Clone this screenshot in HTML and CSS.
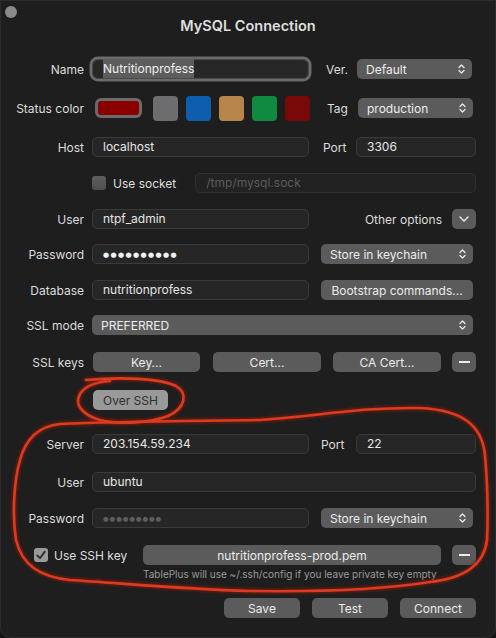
FILE: index.html
```html
<!DOCTYPE html>
<html>
<head>
<meta charset="utf-8">
<link rel="stylesheet" href="styles.css">
</head>
<body>
<div class="window">
  <div class="traffic"></div>
  <div class="title">MySQL Connection</div>

  <div class="form">
    <div class="row r-name">
      <span class="lbl">Name</span>
      <div class="input main focus"><span class="selected-text">Nutritionprofess</span></div>
      <span class="mid mid-ver">Ver.</span>
      <div class="select side"><span>Default</span><svg class="updown" viewBox="0 0 7 12"><path d="M1 4.5 L3.5 2 L6 4.5 M1 7.5 L3.5 10 L6 7.5"/></svg></div>
    </div>

    <div class="row r-status">
      <span class="lbl">Status color</span>
      <div class="swatch-current"><div class="swatch-fill"></div></div>
      <div class="swatches">
        <div class="swatch sw-gray"></div>
        <div class="swatch sw-blue"></div>
        <div class="swatch sw-orange"></div>
        <div class="swatch sw-green"></div>
        <div class="swatch sw-red"></div>
      </div>
      <span class="mid mid-ver">Tag</span>
      <div class="select side"><span>production</span><svg class="updown" viewBox="0 0 7 12"><path d="M1 4.5 L3.5 2 L6 4.5 M1 7.5 L3.5 10 L6 7.5"/></svg></div>
    </div>

    <div class="row r-host">
      <span class="lbl">Host</span>
      <div class="input main">localhost</div>
      <span class="mid">Port</span>
      <div class="input port">3306</div>
    </div>

    <div class="row r-socket">
      <span class="lbl"></span>
      <span class="check"></span>
      <span class="check-label">Use socket</span>
      <div class="input disabled grow">/tmp/mysql.sock</div>
    </div>

    <div class="row r-user">
      <span class="lbl">User</span>
      <div class="input main">ntpf_admin</div>
      <span class="other">Other options</span>
      <div class="btn square"><svg class="chev" viewBox="0 0 10 6"><path d="M1 1 L5 5 L9 1"/></svg></div>
    </div>

    <div class="row r-pass">
      <span class="lbl">Password</span>
      <div class="input main"><span class="dots">●●●●●●●●●●</span></div>
      <div class="select wide"><span>Store in keychain</span><svg class="updown" viewBox="0 0 7 12"><path d="M1 4.5 L3.5 2 L6 4.5 M1 7.5 L3.5 10 L6 7.5"/></svg></div>
    </div>

    <div class="row r-db">
      <span class="lbl">Database</span>
      <div class="input main">nutritionprofess</div>
      <div class="btn wide">Bootstrap commands...</div>
    </div>

    <div class="row r-sslmode">
      <span class="lbl">SSL mode</span>
      <div class="select full"><span>PREFERRED</span><svg class="updown" viewBox="0 0 7 12"><path d="M1 4.5 L3.5 2 L6 4.5 M1 7.5 L3.5 10 L6 7.5"/></svg></div>
    </div>

    <div class="row r-sslkeys">
      <span class="lbl">SSL keys</span>
      <div class="btn key">Key...</div>
      <div class="btn cert">Cert...</div>
      <div class="btn cacert">CA Cert...</div>
      <div class="btn square minus-btn"><span class="minus"></span></div>
    </div>

    <div class="row r-overssh">
      <span class="lbl"></span>
      <div class="btn toggled">Over SSH</div>
    </div>

    <div class="row r-server">
      <span class="lbl">Server</span>
      <div class="input main">203.154.59.234</div>
      <span class="mid mid-port2">Port</span>
      <div class="input port">22</div>
    </div>

    <div class="row r-sshuser">
      <span class="lbl">User</span>
      <div class="input grow">ubuntu</div>
    </div>

    <div class="row r-sshpass">
      <span class="lbl">Password</span>
      <div class="input main"><span class="dots placeholder-dots">●●●●●●●●●</span></div>
      <div class="select wide"><span>Store in keychain</span><svg class="updown" viewBox="0 0 7 12"><path d="M1 4.5 L3.5 2 L6 4.5 M1 7.5 L3.5 10 L6 7.5"/></svg></div>
    </div>

    <div class="row r-sshkey">
      <div class="check-group">
        <span class="check checked"><svg viewBox="0 0 14 14"><path d="M3.2 7.4 L6 10.2 L10.8 3.6"/></svg></span>
        <span class="check-label">Use SSH key</span>
      </div>
      <div class="btn keyfile">nutritionprofess-prod.pem</div>
      <div class="btn square minus-btn"><span class="minus"></span></div>
    </div>

    <div class="help">TablePlus will use ~/.ssh/config if you leave private key empty</div>

    <div class="row r-actions">
      <div class="btn action">Save</div>
      <div class="btn action">Test</div>
      <div class="btn action">Connect</div>
    </div>
  </div>

  <svg class="annot" viewBox="0 0 496 638" width="496" height="638">
    <defs>
      <filter id="glow" x="-10%" y="-10%" width="120%" height="120%">
        <feGaussianBlur stdDeviation="1.6"/>
      </filter>
    </defs>
    <g class="glow" filter="url(#glow)">
      <path d="M86 380 C 120 377, 160 378, 176 386 C 188 393, 186 408, 168 416 C 150 423, 120 425, 100 420 C 82 415, 74 404, 80 394 C 85 386, 95 382, 110 381"/>
      <path d="M60 424 C 120 421, 200 421, 260 420 C 320 416, 360 407, 420 408 C 462 410, 482 425, 485 455 C 488 490, 488 520, 487 540 C 484 565, 465 578, 430 582 C 380 590, 320 592, 250 591 C 180 589, 120 583, 70 580 C 40 577, 22 565, 16 540 C 12 515, 14 480, 20 460 C 26 438, 40 426, 60 424 Z"/>
    </g>
    <g class="stroke">
      <path d="M86 380 C 120 377, 160 378, 176 386 C 188 393, 186 408, 168 416 C 150 423, 120 425, 100 420 C 82 415, 74 404, 80 394 C 85 386, 95 382, 110 381"/>
      <path d="M60 424 C 120 421, 200 421, 260 420 C 320 416, 360 407, 420 408 C 462 410, 482 425, 485 455 C 488 490, 488 520, 487 540 C 484 565, 465 578, 430 582 C 380 590, 320 592, 250 591 C 180 589, 120 583, 70 580 C 40 577, 22 565, 16 540 C 12 515, 14 480, 20 460 C 26 438, 40 426, 60 424 Z"/>
    </g>
  </svg>
</div>
</body>
</html>
```

FILE: styles.css
```css
* { box-sizing: border-box; }
html, body {
  margin: 0;
  padding: 0;
  background: #141414;
}
body {
  font-family: Inter, "Liberation Sans", sans-serif;
  font-size: 12px;
  color: #e2e2e2;
}
.window {
  position: relative;
  width: 496px;
  height: 638px;
  background: #1e1e1e;
  border-radius: 0 0 10px 10px;
  box-shadow: inset 0 0 0 1px #2c2c2c;
  overflow: hidden;
}
.traffic {
  position: absolute;
  left: 5px;
  top: 6px;
  width: 12px;
  height: 12px;
  border-radius: 50%;
  background: #8a8a8a;
}
.title {
  padding-top: 17px;
  height: 36px;
  line-height: 18px;
  text-align: center;
  font-size: 14.5px;
  font-weight: 600;
  color: #dedede;
}
.form {
  width: 476px;
  display: flex;
  flex-direction: column;
}
.row {
  display: flex;
  align-items: center;
  height: 20px;
}
.r-name { margin-top: 23px; }
.r-status { margin-top: 19px; }
.r-host { margin-top: 19px; }
.r-socket { margin-top: 16px; }
.r-user { margin-top: 16px; }
.r-pass { margin-top: 15px; }
.r-db { margin-top: 16px; }
.r-sslmode { margin-top: 15px; }
.r-sslkeys { margin-top: 17px; }
.r-overssh { margin-top: 18px; }
.r-server { margin-top: 24px; }
.r-sshuser { margin-top: 18px; }
.r-sshpass { margin-top: 16px; }
.r-sshkey { margin-top: 17px; }
.r-actions { margin-top: 18px; justify-content: flex-end; gap: 12px; }

.lbl {
  flex: none;
  width: 84px;
  margin-right: 8px;
  text-align: right;
  color: #dcdcdc;
  white-space: nowrap;
}
.mid {
  flex: none;
  width: 47px;
  padding-left: 14px;
  color: #dcdcdc;
}
.mid-ver { width: 48px; padding-left: 17px; }
.mid-port2 { padding-left: 12px; }

.swatch-current {
  flex: none;
  width: 47px;
  height: 20px;
  margin-left: 3px;
  padding: 3px;
  border-radius: 6px;
  background: #6a6a6a;
}
.swatch-fill {
  width: 100%;
  height: 100%;
  border-radius: 3px;
  background: #8a0000;
}
.swatches {
  display: flex;
  gap: 8px;
  margin-left: 11px;
}
.swatch {
  width: 25px;
  height: 25px;
  border-radius: 4px;
}
.sw-gray { background: #6d6d70; }
.sw-blue { background: #0d5fae; }
.sw-orange { background: #b7844c; }
.sw-green { background: #0f8a40; }
.sw-red { background: #790808; }

.input {
  height: 20px;
  line-height: 18px;
  padding: 0 10px;
  background: #262626;
  border: 1px solid #3a3a3a;
  border-radius: 5px;
  color: #e6e6e6;
  white-space: nowrap;
  overflow: hidden;
}
.input.main { width: 217px; flex: none; }
.input.port { width: 120px; flex: none; }
.input.grow { flex: 1; }
.input.focus {
  background: #272727;
  border-color: #4a4a4a;
  box-shadow: 0 0 0 2.5px #6b6b6b;
  border-radius: 6px;
  overflow: visible;
}
.selected-text {
  background: #5d5d5d;
  color: #f0f0f0;
  padding: 2px 0;
}
.input.disabled {
  background: #222222;
  border-color: #2f2f2f;
  color: #5c5c5c;
  margin-left: 19px;
}
.dots {
  font-family: "DejaVu Sans", sans-serif;
  font-size: 7px;
  letter-spacing: 1.4px;
  color: #f2f2f2;
  position: relative;
  top: -1px;
}
.placeholder-dots {
  color: #5e5e5e;
  letter-spacing: 0.9px;
  font-size: 6.5px;
}

.select {
  height: 20px;
  display: flex;
  align-items: center;
  justify-content: space-between;
  padding: 0 7px 0 9px;
  background: #5b5b5b;
  border-radius: 5px;
  color: #ececec;
  flex: none;
}
.select.side { width: 115px; }
.select.wide { width: 152px; margin-left: 12px; }
.select.full { flex: 1; margin-right: 3px; padding-left: 9px; }
.updown {
  width: 7px;
  height: 12px;
  fill: none;
  stroke: #e8e8e8;
  stroke-width: 1.3;
  stroke-linecap: round;
  stroke-linejoin: round;
}

.btn {
  height: 20px;
  display: flex;
  align-items: center;
  justify-content: center;
  background: #5b5b5b;
  border-radius: 5px;
  color: #ececec;
  flex: none;
  white-space: nowrap;
}
.btn.square { width: 24px; }
.btn.wide { width: 152px; margin-left: 12px; }
.chev {
  width: 10px;
  height: 6px;
  fill: none;
  stroke: #ececec;
  stroke-width: 1.4;
  stroke-linecap: round;
  stroke-linejoin: round;
}
.other {
  margin-left: auto;
  margin-right: 10px;
  color: #dcdcdc;
}
.btn.key { width: 107px; margin-left: 1px; }
.btn.cert { width: 108px; margin-left: 13px; }
.btn.cacert { width: 108px; margin-left: 12px; }
.minus-btn { margin-left: auto; }
.minus {
  width: 11px;
  height: 1.5px;
  background: #ececec;
}
.btn.toggled {
  width: 75px;
  margin-left: 1px;
  background: #999999;
  color: #2f2f2f;
}

.check {
  flex: none;
  width: 14px;
  height: 14px;
  border-radius: 3px;
  background: linear-gradient(#5e5e5e, #4e4e4e);
  display: flex;
  align-items: center;
  justify-content: center;
}
.check-group {
  flex: none;
  width: 143px;
  padding-left: 34px;
  display: flex;
  align-items: center;
}
.check.checked {
  background: #9a9a9a;
}
.check svg {
  width: 14px;
  height: 14px;
  fill: none;
  stroke: #2a2a2a;
  stroke-width: 1.8;
  stroke-linecap: round;
  stroke-linejoin: round;
}
.check-label {
  margin-left: 7px;
  color: #dedede;
  white-space: nowrap;
}
.check-group .check-label { margin-left: 6px; }
.btn.keyfile { width: 298px; }

.help {
  margin-top: 3px;
  height: 12px;
  line-height: 12px;
  padding-left: 143px;
  font-size: 10px;
  color: #9a9a9a;
  white-space: nowrap;
}
.btn.action { width: 76px; }

.annot {
  position: absolute;
  left: 0;
  top: 0;
  pointer-events: none;
}
.annot path { fill: none; stroke-linecap: round; stroke-linejoin: round; }
.glow path { stroke: #7a1a0c; stroke-width: 5; opacity: 0.8; }
.stroke path { stroke: #dc3b1f; stroke-width: 2.6; }
```
